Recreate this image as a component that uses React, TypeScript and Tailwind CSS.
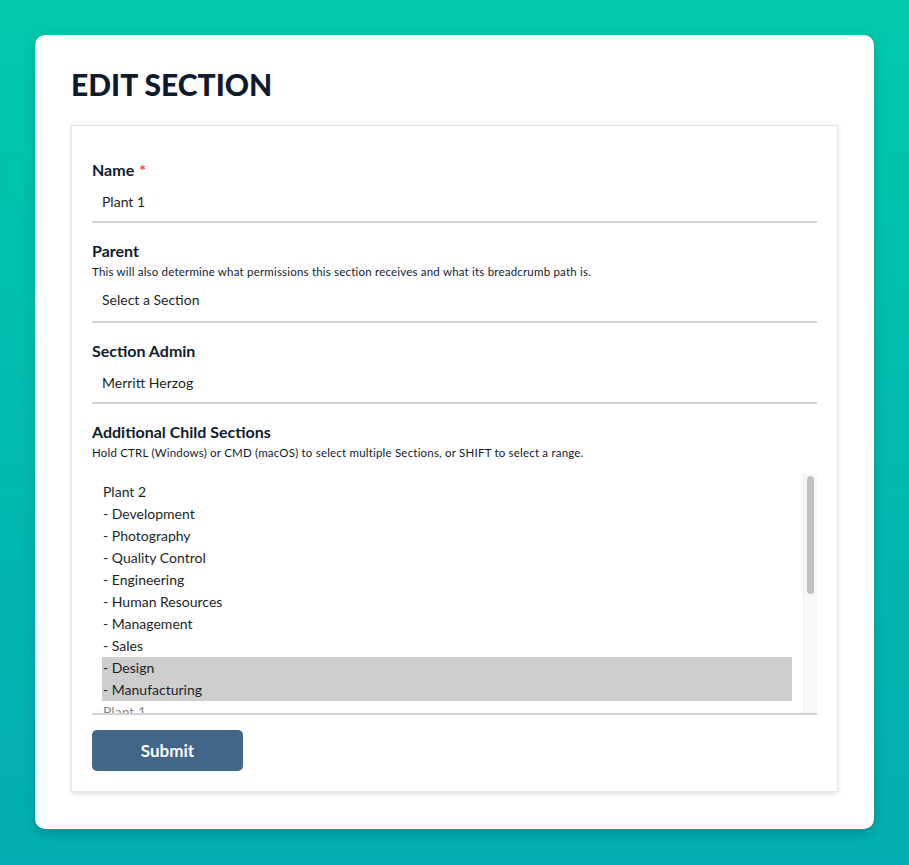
import React from 'react';

const sections = [
  { label: 'Plant 2' },
  { label: '- Development' },
  { label: '- Photography' },
  { label: '- Quality Control' },
  { label: '- Engineering' },
  { label: '- Human Resources' },
  { label: '- Management' },
  { label: '- Sales' },
  { label: '- Design', selected: true },
  { label: '- Manufacturing', selected: true },
  { label: 'Plant 1', disabled: true },
];

const Field: React.FC<{ label: string; required?: boolean; help?: string; value: string }> = ({
  label,
  required,
  help,
  value,
}) => (
  <div className="mt-[18px] first:mt-0">
    <div className="text-[16px] leading-[20px] font-bold text-[#0f1b2d]">
      {label}
      {required && <span className="ml-[5px] text-[#e0474c]">*</span>}
    </div>
    {help && (
      <div className="mt-[3px] text-[11.5px] leading-[16px] tracking-[0.2px] text-[#0f1b2d]">{help}</div>
    )}
    <div
      className={`flex items-center border-b-2 border-[#d0d3d9] px-[10px] text-[14px] text-[#1c1f24] ${
        help ? 'h-[43px] pb-[2px]' : 'h-[43px] pt-[2px]'
      }`}
    >
      {value}
    </div>
  </div>
);

export default function App() {
  return (
    <div
      className="min-h-screen bg-gradient-to-b from-[#00c9ad] to-[#00adb0] p-[35px]"
      style={{ fontFamily: 'Lato, "Open Sans", sans-serif' }}
    >
      <div className="rounded-[10px] bg-white px-[36px] pt-[31px] pb-[37px] shadow-[0_4px_12px_rgba(0,0,0,0.18)]">
        <h1 className="text-[30px] leading-[36px] font-black text-[#0f1b2d]">EDIT SECTION</h1>
        <div className="mt-[23px] border border-[#e6e6e6] px-[20px] pt-[34px] pb-[20px] shadow-[0_2px_5px_rgba(0,0,0,0.12)]">
          <Field label="Name" required value="Plant 1" />
          <Field
            label="Parent"
            help="This will also determine what permissions this section receives and what its breadcrumb path is."
            value="Select a Section"
          />
          <Field label="Section Admin" value="Merritt Herzog" />

          <div className="mt-[18px]">
            <div className="text-[16px] leading-[20px] font-bold text-[#0f1b2d]">Additional Child Sections</div>
            <div className="mt-[3px] text-[11.5px] leading-[16px] tracking-[0.2px] text-[#0f1b2d]">
              Hold CTRL (Windows) or CMD (macOS) to select multiple Sections, or SHIFT to select a range.
            </div>
            <div className="mt-[13px] flex h-[241px] border-b-2 border-[#d0d3d9]">
              <div className="flex-1 overflow-hidden pt-[7px] pl-[10px] pr-[11px]">
                {sections.map((s, i) => (
                  <div
                    key={i}
                    className={`h-[22px] pl-[1px] text-[14px] leading-[22px] ${
                      s.selected ? 'bg-[#cecece] text-[#1c1f24]' : s.disabled ? 'text-[#8a8a8a]' : 'text-[#1c1f24]'
                    }`}
                  >
                    {s.label}
                  </div>
                ))}
              </div>
              <div className="w-[14px] border-l border-[#ececec] bg-[#f8f8f8] px-[3px] pt-[2px]">
                <div className="h-[118px] rounded-full bg-[#c1c1c1]" />
              </div>
            </div>
          </div>

          <button className="mt-[15px] h-[41px] w-[151px] rounded-[5px] bg-[#426689] text-[17px] font-bold text-white">
            Submit
          </button>
        </div>
      </div>
    </div>
  );
}
